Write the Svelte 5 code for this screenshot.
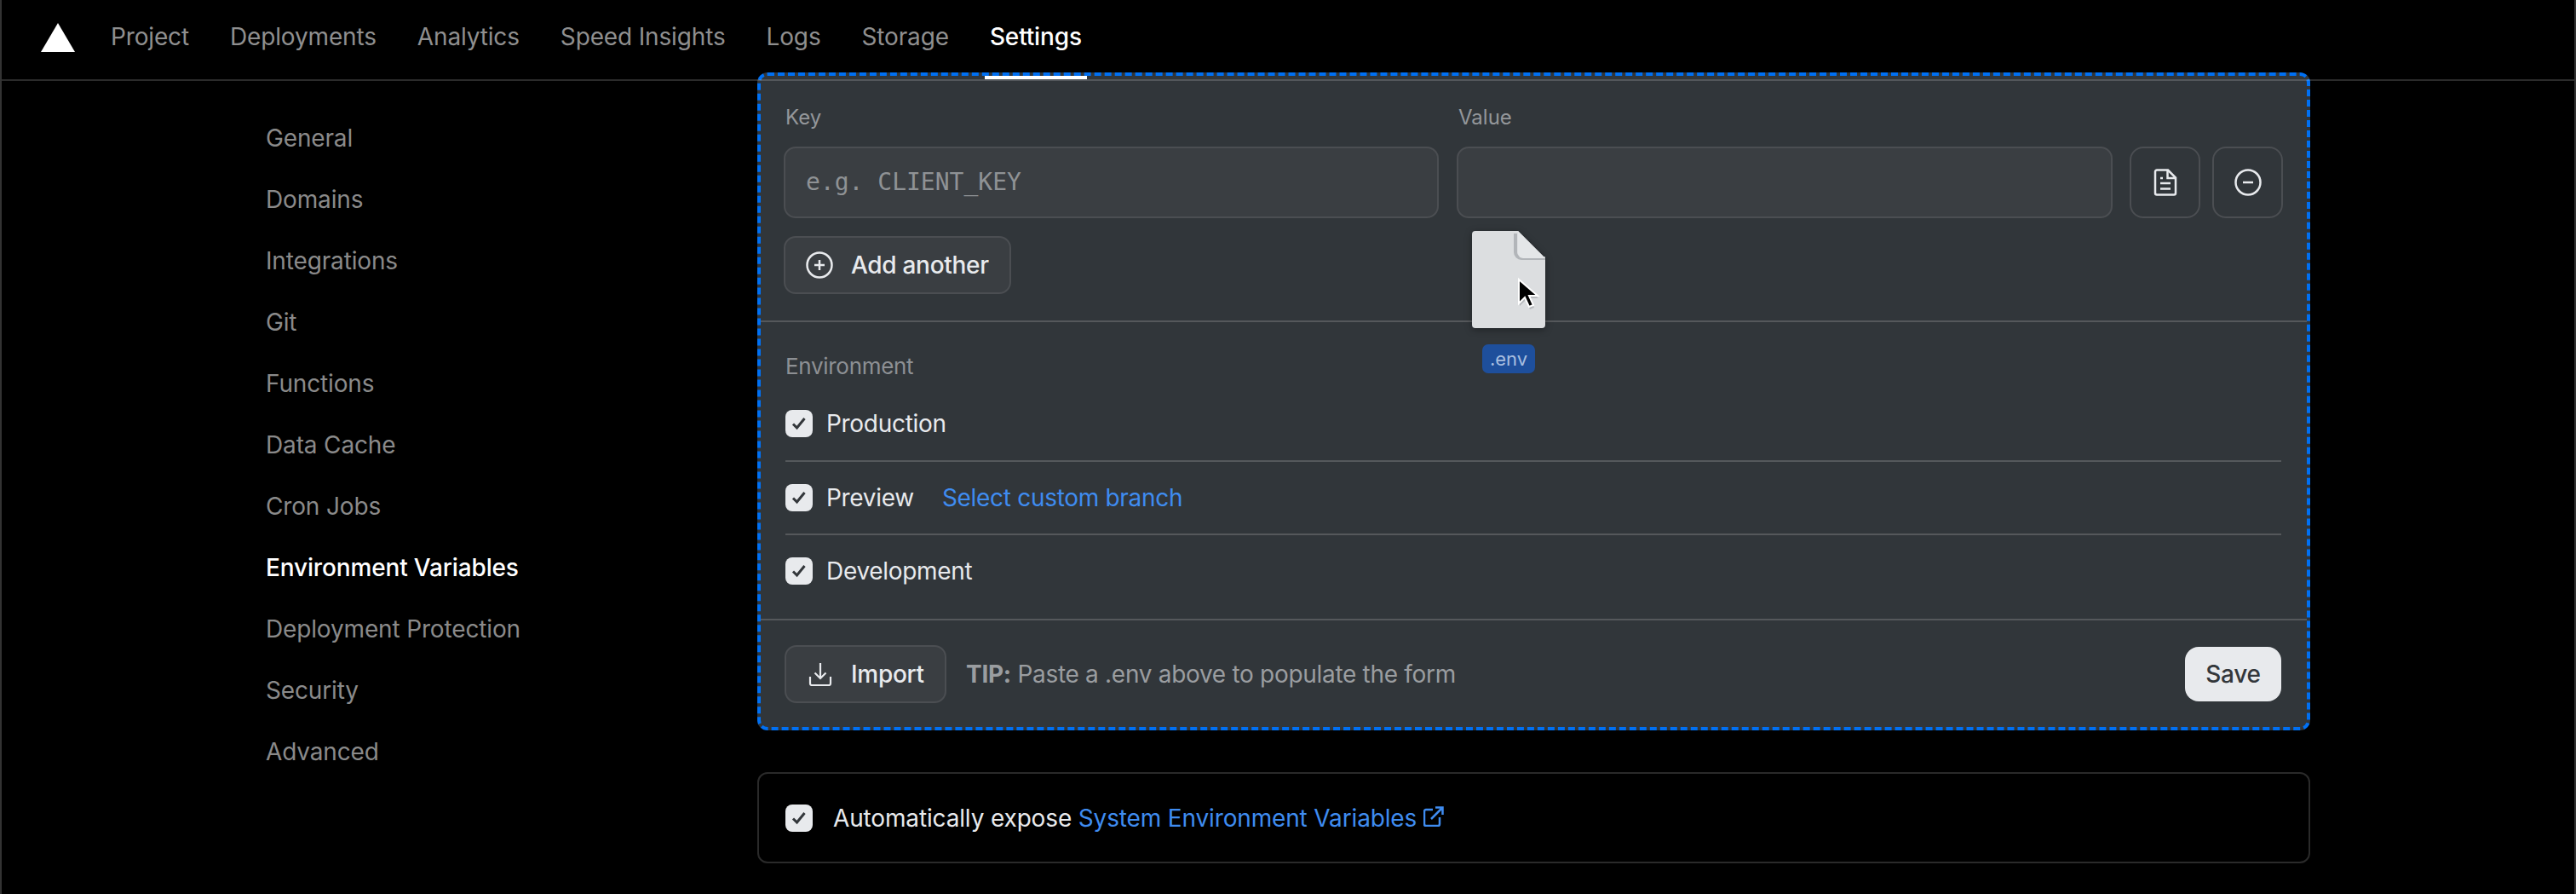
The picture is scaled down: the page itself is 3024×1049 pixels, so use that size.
<script>
  const tabs = ['Project', 'Deployments', 'Analytics', 'Speed Insights', 'Logs', 'Storage', 'Settings'];
  const links = ['General', 'Domains', 'Integrations', 'Git', 'Functions', 'Data Cache', 'Cron Jobs', 'Environment Variables', 'Deployment Protection', 'Security', 'Advanced'];
  const envs = ['Production', 'Preview', 'Development'];
</script>

{#snippet check()}
  <span class="check">
    <svg width="20" height="20" viewBox="0 0 20 20" fill="none">
      <path d="M3 10.500l4.500 4.500L16.500 4" stroke="#33373b" stroke-width="3" />
    </svg>
  </span>
{/snippet}

<div class="page">
  <header>
    <svg class="logo" width="40" height="34" viewBox="0 0 40 34"><path d="M20 0l20 34H0z" fill="#fff" /></svg>
    <nav>
      {#each tabs as tab}
        <span class="tab" class:active={tab === 'Settings'}>{tab}</span>
      {/each}
    </nav>
  </header>

  <div class="content">
    <aside>
      {#each links as link}
        <span class="side" class:active={link === 'Environment Variables'}>{link}</span>
      {/each}
    </aside>

    <main>
      <section class="panel">
        <div class="fields">
          <div class="labels">
            <span>Key</span>
            <span>Value</span>
          </div>
          <div class="inputs">
            <div class="input mono">e.g. CLIENT_KEY</div>
            <div class="input"></div>
            <button class="square" aria-label="Notes">
              <svg width="32" height="32" viewBox="0 0 32 32" fill="none" stroke="#e8eaed" stroke-width="2.500">
                <path d="M4 3.500a2 2 0 0 1 2-2h13l9 9v18a2 2 0 0 1-2 2H6a2 2 0 0 1-2-2z" />
                <path d="M18.500 1.500v9.500H28M10 11h3M10 17h12M10 23.500h12" />
              </svg>
            </button>
            <button class="square" aria-label="Remove">
              <svg width="32" height="32" viewBox="0 0 32 32" fill="none" stroke="#e8eaed" stroke-width="2.500">
                <circle cx="16" cy="16" r="14.500" />
                <path d="M10 16h12" />
              </svg>
            </button>
          </div>
          <button class="outline add">
            <svg width="32" height="32" viewBox="0 0 32 32" fill="none" stroke="#e8eaed" stroke-width="2.500">
              <circle cx="16" cy="16" r="14.500" />
              <path d="M16 10v12M10 16h12" />
            </svg>
            Add another
          </button>
        </div>

        <div class="envs">
          <div class="env-label">Environment</div>
          {#each envs as env}
            <div class="env-row">
              {@render check()}
              <span>{env}</span>
              {#if env === 'Preview'}
                <span class="link branch">Select custom branch</span>
              {/if}
            </div>
          {/each}
        </div>

        <div class="foot">
          <button class="outline import">
            <svg width="28" height="28" viewBox="0 0 28 28" fill="none" stroke="#e8eaed" stroke-width="2.200">
              <path d="M14 1v18M7.500 12.500l6.500 6.500 6.500-6.500M2 17v8a2 2 0 0 0 2 2h20a2 2 0 0 0 2-2v-8" />
            </svg>
            Import
          </button>
          <span class="tip"><b>TIP:</b> Paste a .env above to populate the form</span>
          <button class="save">Save</button>
        </div>
      </section>

      <div class="expose">
        {@render check()}
        <span>Automatically expose <span class="link">System Environment Variables</span></span>
        <svg class="ext" width="24" height="24" viewBox="0 0 24 24" fill="none" stroke="#3f8cf0" stroke-width="2.500">
          <path d="M11 4H3a2 2 0 0 0-2 2v15a2 2 0 0 0 2 2h14a2 2 0 0 0 2-2v-8M9 15L22 2M14 1.500h8.500V10" />
        </svg>
      </div>
    </main>
  </div>

  <!-- dragged file, sits over the form -->
  <div class="ghost">
    <svg width="86" height="114" viewBox="0 0 86 114">
      <path d="M4 0h50l32 32v78a4 4 0 0 1-4 4H4a4 4 0 0 1-4-4V4a4 4 0 0 1 4-4z" fill="#dcdee0" />
      <path d="M51 3v22a7 7 0 0 0 7 7h28" fill="none" stroke="#b2b5b9" stroke-width="4" />
      <path d="M54 0l32 32H60a6 6 0 0 1-6-6z" fill="#e4e6e8" />
      <path d="M56 60v28l7-7 5 11 5-2-5-11h10z" fill="#a6a9ad" opacity="0.7" />
      <path d="M55 57v28l7-7 5 11 5-2-5-11h10z" fill="#000" stroke="#fff" stroke-width="2" />
    </svg>
    <span class="ghost-name">.env</span>
  </div>
</div>

<style>
  :global(body) {
    background: #000;
  }

  .page {
    position: relative;
    height: 1049px;
    overflow: hidden;
    background: #000;
    color: #e8eaed;
    font-family: Inter, "Liberation Sans", sans-serif;
    font-size: 28px;
    letter-spacing: -0.3px;
    border-left: 2px solid #333;
    border-right: 2px solid #333;
    box-sizing: border-box;
  }

  header {
    position: relative;
    z-index: 2;
    display: flex;
    align-items: center;
    height: 95px;
    box-sizing: border-box;
    padding: 0 0 2px 46px;
    border-bottom: 2px solid rgba(255, 255, 255, 0.17);
  }

  .logo {
    margin-top: -4px;
    margin-right: 42px;
  }

  nav {
    display: flex;
    gap: 48px;
    align-self: stretch;
    align-items: center;
    letter-spacing: -0.15px;
  }

  .tab {
    position: relative;
    color: #8f8f8f;
    margin-top: -5px;
  }

  .tab.active {
    color: #fff;
    font-weight: 500;
  }

  .tab.active::after {
    content: '';
    position: absolute;
    left: -6px;
    right: -6px;
    top: 63px;
    height: 4px;
    background: #fff;
  }

  .content {
    display: flex;
    margin-top: -10px;
    padding-left: 310px;
  }

  aside {
    width: 577px;
    flex: none;
    display: flex;
    flex-direction: column;
    padding-top: 41px;
    letter-spacing: -0.15px;
  }

  .side {
    height: 72px;
    line-height: 72px;
    color: #8a8a8a;
  }

  .side.active {
    color: #fff;
    font-weight: 500;
  }

  main {
    width: 1823px;
  }

  .panel {
    border: 4px dashed #0070f3;
    border-radius: 12px;
    background: #31363a;
  }

  .fields {
    padding: 34px 28px 31px 27px;
    border-bottom: 2px solid #55585b;
  }

  .labels {
    display: grid;
    grid-template-columns: 769px 1fr;
    gap: 21px;
    height: 30px;
    line-height: 30px;
    padding-left: 2px;
    font-size: 24px;
    letter-spacing: 0;
    color: #94979a;
    margin-bottom: 19px;
  }

  .inputs {
    display: grid;
    grid-template-columns: 769px 770px 83px 83px;
    gap: 0 21px;
    margin-bottom: 21px;
  }

  .inputs .square {
    margin-left: -1px;
  }

  .inputs .square:last-child {
    margin-left: -8px;
  }

  .input {
    height: 84px;
    box-sizing: border-box;
    background: #3a3e42;
    border: 2px solid #4b4e52;
    border-radius: 14px;
  }

  .mono {
    font-family: "DejaVu Sans Mono", monospace;
    letter-spacing: 0;
    color: #8f9295;
    padding-left: 24px;
    line-height: 80px;
  }

  button {
    font: inherit;
    letter-spacing: inherit;
    color: #e8eaed;
    font-weight: 500;
    background: none;
    box-sizing: border-box;
    cursor: pointer;
  }

  .square {
    display: flex;
    align-items: center;
    justify-content: center;
    height: 84px;
    width: 83px;
    padding: 0;
    background: #31363a;
    border: 2px solid #4b4e52;
    border-radius: 16px;
  }

  .outline {
    display: flex;
    align-items: center;
    height: 68px;
    background: #3a3e42;
    border: 2px solid #4b4e52;
    border-radius: 14px;
  }

  .add {
    gap: 21px;
    padding: 0 24px;
  }

  .envs {
    padding: 37px 30px 13.500px 29px;
    border-bottom: 2px solid #55585b;
  }

  .env-label {
    height: 30px;
    line-height: 30px;
    font-size: 26px;
    color: #8d9094;
    margin-bottom: 10px;
  }

  .env-row {
    display: flex;
    align-items: center;
    gap: 16px;
    height: 84.500px;
    border-bottom: 2px solid #55585b;
  }

  .env-row:last-child {
    border-bottom: 0;
  }

  .check {
    width: 32px;
    height: 32px;
    flex: none;
    border-radius: 8px;
    background: #e8eaed;
    display: flex;
    align-items: center;
    justify-content: center;
  }

  .link {
    color: #3f8cf0;
  }

  .branch {
    margin-left: 17px;
  }

  .foot {
    display: flex;
    align-items: center;
    height: 125px;
    box-sizing: border-box;
    padding: 1px 30px 0 28px;
  }

  .import {
    width: 190px;
    gap: 22px;
    padding: 0 0 0 26px;
  }

  .tip {
    margin-left: 23px;
    color: #9a9da0;
  }

  .tip b {
    font-weight: 700;
  }

  .save {
    margin-left: auto;
    width: 113px;
    height: 64px;
    border: 0;
    border-radius: 16px;
    background: #e8eaed;
    color: #33373b;
  }

  .expose {
    display: flex;
    align-items: center;
    height: 107px;
    box-sizing: border-box;
    margin-top: 49px;
    padding: 0 31px;
    border: 2px solid #2a2a2a;
    border-radius: 12px;
    letter-spacing: -0.15px;
  }

  .expose .check {
    margin-right: 24px;
  }

  .ext {
    margin-left: 8px;
    margin-top: -3px;
  }

  .ghost {
    position: absolute;
    z-index: 3;
    left: 1726px;
    top: 271px;
    width: 86px;
    display: flex;
    flex-direction: column;
    align-items: center;
    gap: 19px;
  }

  .ghost svg {
    filter: drop-shadow(0 2px 4px rgba(0, 0, 0, 0.35));
  }

  .ghost-name {
    width: 62px;
    height: 34px;
    line-height: 34px;
    text-align: center;
    border-radius: 7px;
    background: #1e4f9c;
    color: #a9bfe0;
    font-size: 22px;
    letter-spacing: 0;
  }
</style>
